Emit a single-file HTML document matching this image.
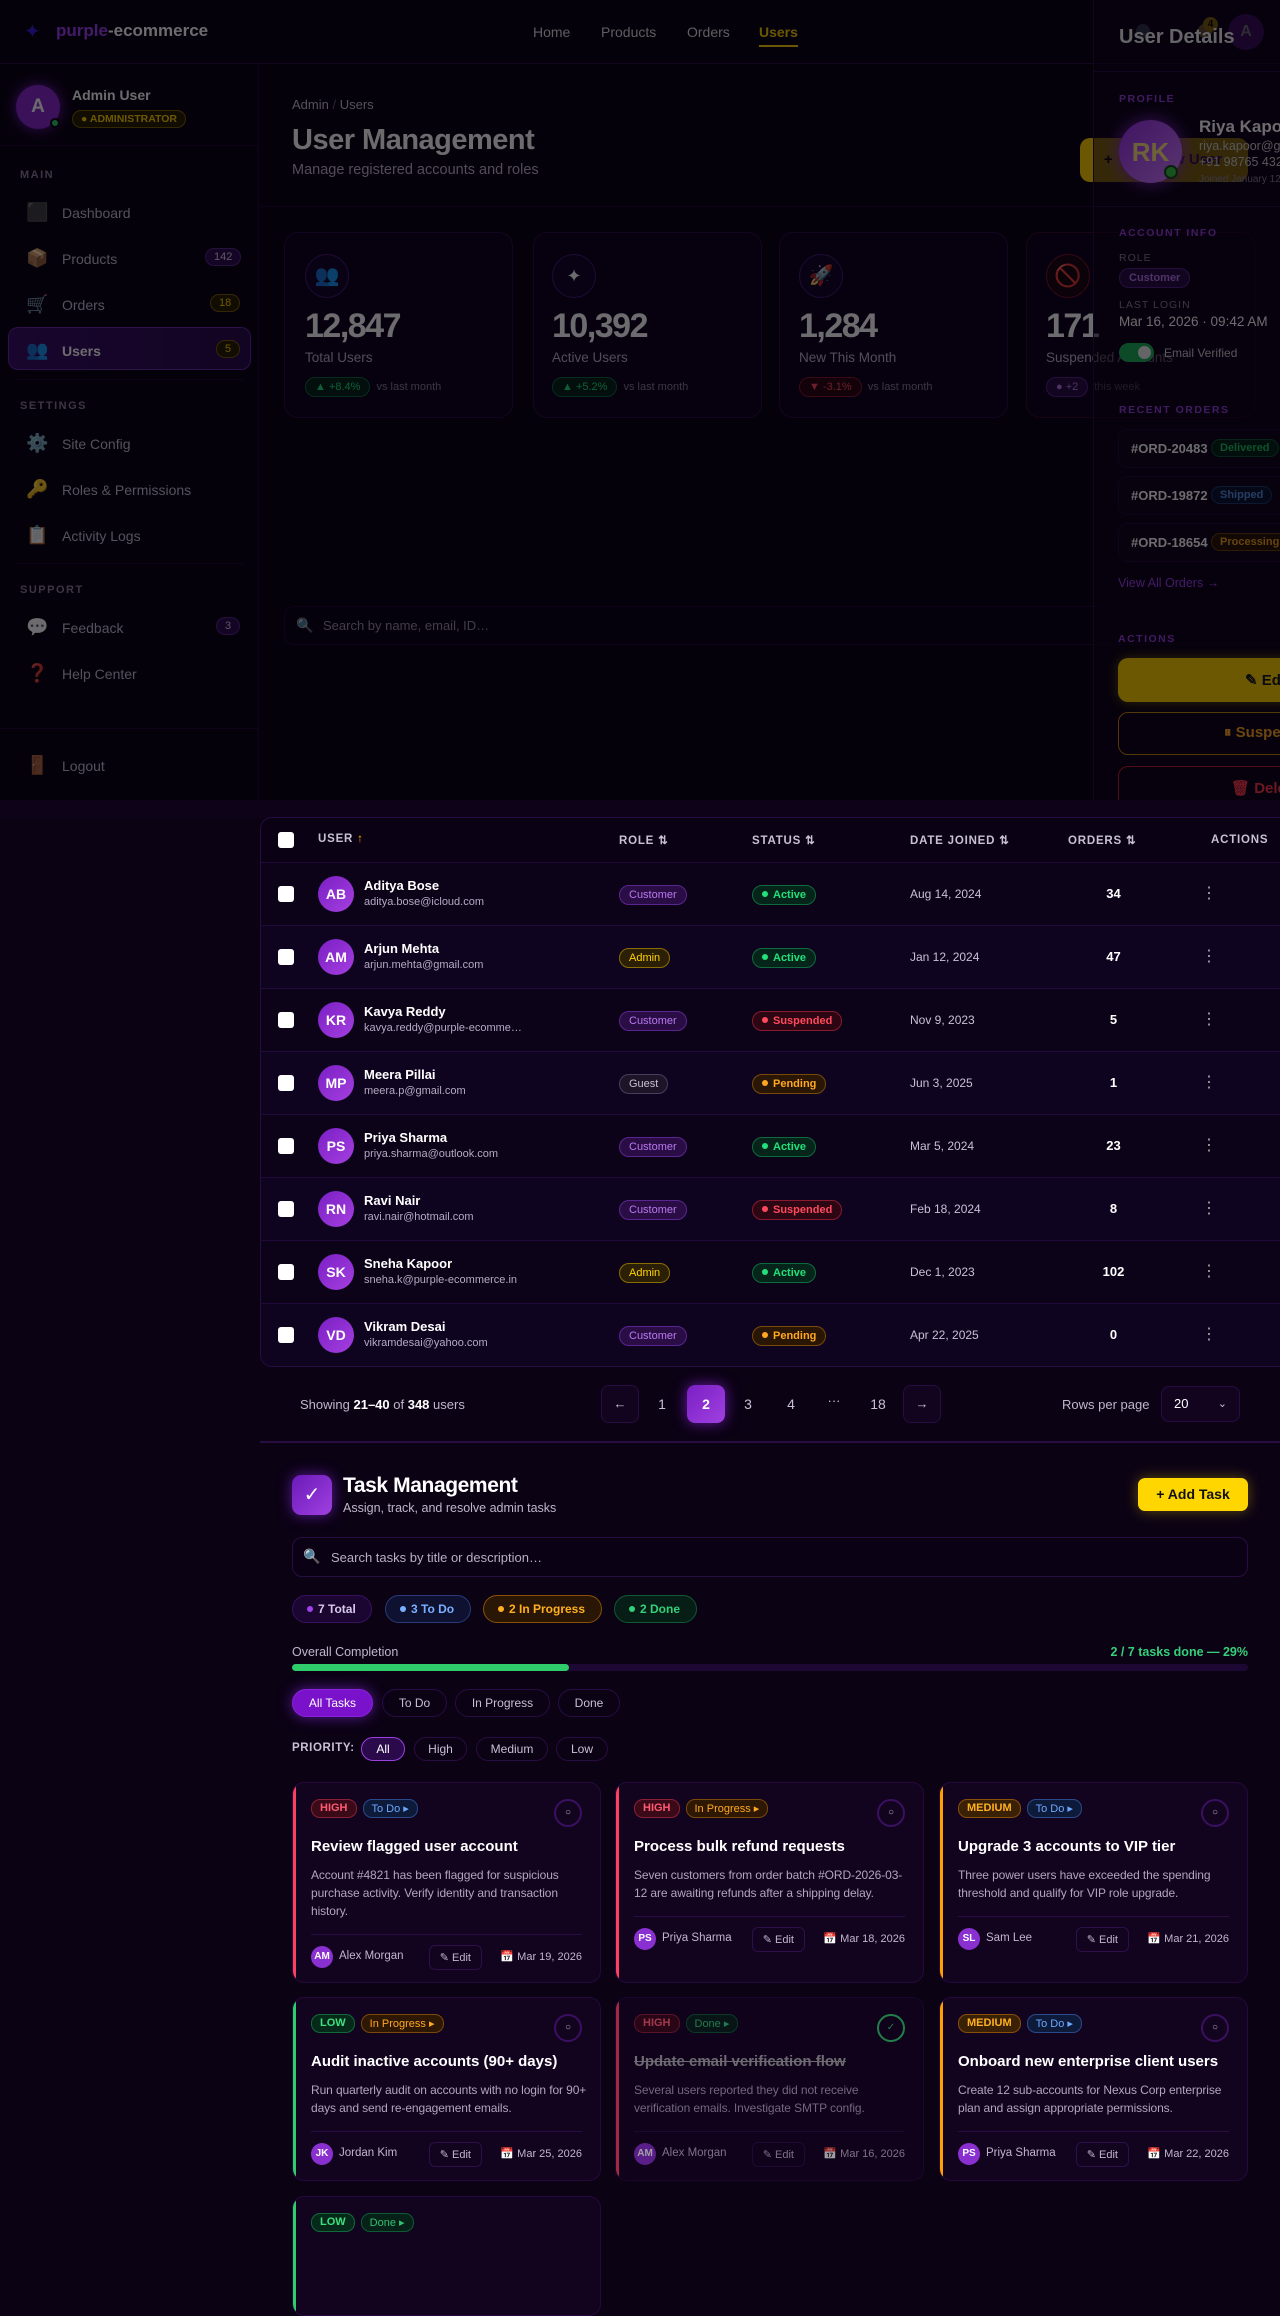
<!DOCTYPE html>
<html><head><meta charset="utf-8">
<style>
*{box-sizing:border-box;margin:0;padding:0}
html,body{width:1280px;height:2215px;overflow:hidden;background:#0b0214;font-family:"Liberation Sans",sans-serif;color:#fff}
.a{position:absolute}
.top{position:absolute;left:0;top:0;width:1280px;height:800px;background:#0a0412;overflow:hidden}
.hdr{left:0;top:0;width:1280px;height:64px;border-bottom:1px solid #2a0c44;background:#0a0412}
.side{left:0;top:64px;width:259px;height:736px;border-right:1px solid #22093a;background:#0a0412}
.nav{left:26px;font-size:14px;color:#c9c2d4;display:flex;align-items:center}
.nav .ic{width:22px;font-size:18px;margin-right:14px;text-align:center}
.sec{left:20px;font-size:11px;letter-spacing:1.5px;color:#8c7fa0;font-weight:bold}
.bdg{position:absolute;font-size:11px;padding:2px 8px;border-radius:10px}
.card{background:#10041e;border:1px solid #2b0e48;border-radius:14px}
.pill{display:inline-block;font-size:11px;font-weight:bold;padding:3px 9px;border-radius:10px}
.row{position:absolute;left:0;width:1040px;height:63px;border-top:1px solid #22093a}
.cb{position:absolute;left:17px;top:23px;width:16px;height:16px;background:#fff;border-radius:3px}
.av{position:absolute;width:36px;height:36px;border-radius:50%;background:linear-gradient(135deg,#7a1fc4,#a53fe0);font-size:14px;font-weight:bold;text-align:center;line-height:36px}
.nm{position:absolute;left:103px;top:15px;font-size:13px;font-weight:bold}
.em{position:absolute;left:103px;top:33px;font-size:11px;color:#b4aac2}
.cust{background:#2a0d45;border:1px solid #5a2590;color:#b978f0}
.adm{background:#2b2006;border:1px solid #8a6d00;color:#ffd200}
.gst{background:#1d1428;border:1px solid #4a3c5a;color:#c8c0d4}
.act{background:#06251a;border:1px solid #0f6a3e;color:#22e07a}
.sus{background:#2c0612;border:1px solid #8a1a2e;color:#ff4a5e}
.pen{background:#2a1604;border:1px solid #7a4a08;color:#ffa820}
.dot{display:inline-block;width:6px;height:6px;border-radius:50%;background:currentColor;margin-right:5px;vertical-align:1px}
.tcard{position:absolute;width:309px;background:#12031f;border:1px solid #26093e;border-radius:12px;overflow:hidden}
.tcard .lb{position:absolute;left:0;top:0;bottom:0;width:3px}
.tb{position:absolute;top:16px;left:18px;display:flex;gap:6px}
.tp{font-size:11px;font-weight:bold;padding:2px 8px;border-radius:9px}
.hi{background:#3a0a18;border:1px solid #8a2036;color:#ff5a72}
.me{background:#3a2004;border:1px solid #8a5008;color:#ffb020}
.lo{background:#062a1a;border:1px solid #116a3c;color:#3ee07e}
.td{background:#0e1a3a;border:1px solid #2a4a8a;color:#6aa8ff;font-weight:normal}
.ip{background:#2e1804;border:1px solid #7a4a08;color:#ffa820;font-weight:normal}
.dn{background:#062218;border:1px solid #0e5a34;color:#34c070;font-weight:normal}
.circ{position:absolute;right:18px;top:16px;width:28px;height:28px;border-radius:50%;border:2px solid #3a1060;font-size:10px;color:#b8a8c8;text-align:center;line-height:24px}
.tt{position:absolute;left:18px;top:55px;font-size:15px;font-weight:bold;white-space:nowrap}
.ds{position:absolute;left:18px;top:83px;width:280px;font-size:12px;line-height:18px;color:#b0a6bd;letter-spacing:-0.1px}
.ft{position:absolute;left:18px;right:18px;border-top:1px solid #2a0c44;height:44px}
.ft .fa{position:absolute;left:0;top:11px;width:22px;height:22px;border-radius:50%;background:#8a30d0;font-size:10px;font-weight:bold;line-height:22px;text-align:center}
.ft .fn{position:absolute;left:28px;top:15px;font-size:11.5px;color:#c0b6cc}
.ft .fe{position:absolute;right:100px;top:10px;font-size:11px;color:#c0b6cc;border:1px solid #2e0f4a;border-radius:6px;padding:5px 10px}
.ft .fd{position:absolute;right:0;top:15px;font-size:11px;color:#c0b6cc}
.chip{position:absolute;top:1595px;height:28px;border-radius:14px;font-size:12px;font-weight:bold;line-height:26px;padding:0 14px}
.tab{position:absolute;top:1689px;height:28px;border-radius:14px;border:1px solid #2a0c44;font-size:12px;color:#c8bfd4;line-height:26px;text-align:center}
.pr{position:absolute;top:1737px;height:24px;border-radius:12px;border:1px solid #2a0c44;font-size:12px;color:#c8bfd4;line-height:22px;text-align:center}
.dl{font-size:10.5px;letter-spacing:1.5px;font-weight:bold;color:#9a40e0}
.oc{position:absolute;left:1118px;width:200px;height:39px;border:1px solid #24083a;border-radius:9px;background:#0f0519}
.oc b{position:absolute;left:12px;top:11px;font-size:13px}
.oc span{position:absolute;left:92px;top:9px;font-size:11px;font-weight:bold;padding:2px 8px;border-radius:9px}
</style></head><body>

<div class="top">
 <div class="a hdr">
  <div class="a" style="left:24px;top:19px;font-size:20px;color:#3420e0">✦</div>
  <div class="a" style="left:56px;top:21px;font-size:17px;font-weight:bold"><span style="color:#a040f0">purple</span>-ecommerce</div>
  <div class="a" style="left:533px;top:24px;font-size:14px;color:#ddd">Home</div>
  <div class="a" style="left:601px;top:24px;font-size:14px;color:#ddd">Products</div>
  <div class="a" style="left:687px;top:24px;font-size:14px;color:#ddd">Orders</div>
  <div class="a" style="left:759px;top:24px;font-size:14px;color:#ffd000;font-weight:bold">Users</div>
  <div class="a" style="left:759px;top:45px;width:39px;height:2px;background:#ffd000"></div>
  <div class="a" style="left:1136px;top:24px;width:14px;height:14px;border-radius:50%;background:#5a6a88"></div>
  <div class="a" style="left:1198px;top:24px;width:14px;height:14px;border-radius:50%;background:#c8a050"></div>
  <div class="a" style="left:1203px;top:17px;width:15px;height:15px;border-radius:50%;background:#ffd000;color:#000;font-size:10px;font-weight:bold;text-align:center;line-height:15px">4</div>
  <div class="a" style="left:1228px;top:14px;width:36px;height:36px;border-radius:50%;background:#6a1aa8;text-align:center;line-height:36px;font-weight:bold;color:#ddd">A</div>
 </div>
 <div class="a side">
  <div class="a" style="left:16px;top:21px;width:44px;height:44px;border-radius:50%;background:#8a2ad0;text-align:center;line-height:44px;font-size:19px;font-weight:bold;box-shadow:0 0 14px #7a20c0">A</div>
  <div class="a" style="left:50px;top:54px;width:10px;height:10px;border-radius:50%;background:#2ed06a;border:2px solid #0a0412"></div>
  <div class="a" style="left:72px;top:23px;font-size:14px;font-weight:bold">Admin User</div>
  <div class="a" style="left:72px;top:46px;font-size:10.5px;font-weight:bold;color:#ffd000;border:1px solid #7a6000;background:#2a2000;border-radius:9px;padding:2px 8px">● ADMINISTRATOR</div>
  <div class="a" style="left:0;top:81px;width:259px;height:1px;background:#22093a"></div>
  <div class="a sec" style="top:105px">MAIN</div>
  <div class="a nav" style="top:138px"><span class="ic">⬛</span>Dashboard</div>
  <div class="a nav" style="top:184px"><span class="ic">📦</span>Products</div>
  <div class="bdg" style="left:205px;top:184px;background:#2c0c4e;border:1px solid #5a2a90;color:#e0d0f0">142</div>
  <div class="a nav" style="top:230px"><span class="ic">🛒</span>Orders</div>
  <div class="bdg" style="left:210px;top:230px;background:#2a2000;border:1px solid #7a6000;color:#ffd000">18</div>
  <div class="a" style="left:8px;top:263px;width:243px;height:43px;border-radius:10px;background:linear-gradient(90deg,#3a0f66,#2a0a4c);border:1px solid #6a2aa8"></div>
  <div class="a nav" style="top:276px;color:#fff;font-weight:bold"><span class="ic">👥</span>Users</div>
  <div class="bdg" style="left:216px;top:276px;background:#2a2000;border:1px solid #7a6000;color:#ffd000">5</div>
  <div class="a" style="left:16px;top:315px;width:228px;height:1px;background:#1c0830"></div>
  <div class="a sec" style="top:336px">SETTINGS</div>
  <div class="a nav" style="top:369px"><span class="ic">⚙️</span>Site Config</div>
  <div class="a nav" style="top:415px"><span class="ic">🔑</span>Roles &amp; Permissions</div>
  <div class="a nav" style="top:461px"><span class="ic">📋</span>Activity Logs</div>
  <div class="a" style="left:16px;top:499px;width:228px;height:1px;background:#1c0830"></div>
  <div class="a sec" style="top:520px">SUPPORT</div>
  <div class="a nav" style="top:553px"><span class="ic">💬</span>Feedback</div>
  <div class="bdg" style="left:216px;top:553px;background:#2c0c4e;border:1px solid #5a2a90;color:#e0d0f0">3</div>
  <div class="a nav" style="top:599px"><span class="ic">❓</span>Help Center</div>
  <div class="a" style="left:0;top:664px;width:259px;height:1px;background:#22093a"></div>
  <div class="a nav" style="top:691px"><span class="ic">🚪</span>Logout</div>
 </div>
 <div class="a" style="left:292px;top:97px;font-size:13px;color:#c8c0d4">Admin <span style="color:#6a5a80">/</span> Users</div>
 <div class="a" style="left:292px;top:124px;font-size:29px;font-weight:bold;letter-spacing:-0.5px">User Management</div>
 <div class="a" style="left:292px;top:162px;font-size:14.5px;color:#c0b6cc">Manage registered accounts and roles</div>
 <div class="a" style="left:1080px;top:138px;width:168px;height:44px;border-radius:10px;background:#ffd000;color:#5a10a0;font-size:15px;font-weight:bold;line-height:44px;padding-left:24px"><span style="color:#000">+</span>&nbsp; Add New User</div>
 <div class="a" style="left:260px;top:206px;width:1020px;height:1px;background:#22093a"></div>
 <div class="a card" style="left:284px;top:232px;width:229px;height:186px"></div>
 <div class="a card" style="left:533px;top:232px;width:229px;height:186px"></div>
 <div class="a card" style="left:779px;top:232px;width:229px;height:186px"></div>
 <div class="a card" style="left:1026px;top:232px;width:229px;height:186px;border-color:#3a0c22"></div>
 <div class="a" style="left:305px;top:254px;width:44px;height:44px;border-radius:50%;border:1px solid #4a1a78;background:#14052a;text-align:center;line-height:42px;font-size:20px">👥</div>
 <div class="a" style="left:552px;top:254px;width:44px;height:44px;border-radius:50%;border:1px solid #4a1a78;background:#14052a;text-align:center;line-height:42px;font-size:18px;color:#fff">✦</div>
 <div class="a" style="left:799px;top:254px;width:44px;height:44px;border-radius:50%;border:1px solid #4a1a78;background:#14052a;text-align:center;line-height:42px;font-size:20px">🚀</div>
 <div class="a" style="left:1046px;top:254px;width:44px;height:44px;border-radius:50%;border:1px solid #7a1a2a;background:#1a0512;text-align:center;line-height:42px;font-size:22px;color:#ff3040">🚫</div>
 <div class="a" style="left:305px;top:307px;font-size:34px;font-weight:bold;letter-spacing:-1.5px">12,847</div>
 <div class="a" style="left:552px;top:307px;font-size:34px;font-weight:bold;letter-spacing:-1.5px">10,392</div>
 <div class="a" style="left:799px;top:307px;font-size:34px;font-weight:bold;letter-spacing:-1.5px">1,284</div>
 <div class="a" style="left:1046px;top:307px;font-size:34px;font-weight:bold;letter-spacing:-1.5px">171</div>
 <div class="a" style="left:305px;top:350px;font-size:13.5px;color:#c0b6cc">Total Users</div>
 <div class="a" style="left:552px;top:350px;font-size:13.5px;color:#c0b6cc">Active Users</div>
 <div class="a" style="left:799px;top:350px;font-size:13.5px;color:#c0b6cc">New This Month</div>
 <div class="a" style="left:1046px;top:350px;font-size:13.5px;color:#c0b6cc">Suspended Accounts</div>
 <div class="a" style="left:305px;top:377px;font-size:11px;color:#8a8098"><span class="pill act" style="font-weight:normal;margin-right:6px">▲ +8.4%</span>vs last month</div>
 <div class="a" style="left:552px;top:377px;font-size:11px;color:#8a8098"><span class="pill act" style="font-weight:normal;margin-right:6px">▲ +5.2%</span>vs last month</div>
 <div class="a" style="left:799px;top:377px;font-size:11px;color:#8a8098"><span class="pill sus" style="font-weight:normal;margin-right:6px">▼ -3.1%</span>vs last month</div>
 <div class="a" style="left:1046px;top:377px;font-size:11px;color:#8a8098"><span class="pill cust" style="font-weight:normal;margin-right:6px">● +2</span>this week</div>
 <div class="a" style="left:284px;top:606px;width:1000px;height:39px;border:1px solid #22093a;border-radius:10px;background:#0b0316"></div>
 <div class="a" style="left:296px;top:617px;font-size:14px">🔍</div>
 <div class="a" style="left:323px;top:618px;font-size:13px;color:#9a90a8">Search by name, email, ID…</div>

 <div class="a" style="left:1093px;top:0;width:200px;height:800px;background:rgba(14,5,26,0.55);border-left:1px solid #2a0c44">
  <div class="a" style="left:25px;top:26px;font-size:20px;font-weight:bold;color:#eee">User Details</div>
  <div class="a" style="left:0;top:71px;width:200px;height:1px;background:#2a0c44"></div>
  <div class="a dl" style="left:25px;top:93px">PROFILE</div>
  <div class="a" style="left:25px;top:120px;width:63px;height:63px;border-radius:50%;background:linear-gradient(135deg,#9a30e8,#d080ff);box-shadow:0 0 18px #8a2ad0"></div>
  <div class="a" style="left:25px;top:137px;width:63px;text-align:center;font-size:26px;font-weight:bold;color:#ffe880">RK</div>
  <div class="a" style="left:70px;top:165px;width:14px;height:14px;border-radius:50%;background:#3ac040;border:2px solid #1a4a1a"></div>
  <div class="a" style="left:105px;top:117px;font-size:17px;font-weight:bold;white-space:nowrap">Riya Kapoor</div>
  <div class="a" style="left:105px;top:139px;font-size:12.5px;color:#ccc;white-space:nowrap">riya.kapoor@gmail.com</div>
  <div class="a" style="left:105px;top:155px;font-size:12.5px;color:#ccc;white-space:nowrap">+91 98765 43210</div>
  <div class="a" style="left:105px;top:174px;font-size:10px;color:#8a8098;white-space:nowrap">Joined January 12, 2024</div>
  <div class="a" style="left:0;top:206px;width:200px;height:1px;background:#2a0c44"></div>
  <div class="a dl" style="left:25px;top:227px">ACCOUNT INFO</div>
  <div class="a" style="left:25px;top:252px;font-size:10.5px;letter-spacing:1px;color:#8a8098">ROLE</div>
  <div class="a pill cust" style="left:25px;top:268px">Customer</div>
  <div class="a" style="left:25px;top:299px;font-size:10.5px;letter-spacing:1px;color:#8a8098">LAST LOGIN</div>
  <div class="a" style="left:25px;top:314px;font-size:13.5px;white-space:nowrap">Mar 16, 2026 · 09:42 AM</div>
  <div class="a" style="left:25px;top:343px;width:35px;height:19px;border-radius:10px;background:#1eb05a"></div>
  <div class="a" style="left:44px;top:346px;width:13px;height:13px;border-radius:50%;background:#eee"></div>
  <div class="a" style="left:70px;top:346px;font-size:12px;color:#ccc;white-space:nowrap">Email Verified</div>
  <div class="a dl" style="left:25px;top:404px">RECENT ORDERS</div>
 </div>
 <div class="oc" style="top:429px"><b>#ORD-20483</b><span style="color:#20c060;border:1px solid #0e5a32;background:#05251a">Delivered</span></div>
 <div class="oc" style="top:476px"><b>#ORD-19872</b><span style="color:#5a90e0;border:1px solid #1e3a70;background:#0a1630">Shipped</span></div>
 <div class="oc" style="top:523px"><b>#ORD-18654</b><span style="color:#f0a020;border:1px solid #6a4008;background:#2a1604">Processing</span></div>
 <div class="a" style="left:1118px;top:576px;font-size:12.5px;color:#a040f0">View All Orders →</div>
 <div class="a dl" style="left:1118px;top:633px">ACTIONS</div>
 <div class="a" style="left:1118px;top:658px;width:200px;height:44px;border-radius:10px;background:#ffd000;box-shadow:0 0 12px rgba(255,208,0,.4)"></div>
 <div class="a" style="left:1245px;top:671px;font-size:15px;font-weight:bold;color:#1a1a1a;white-space:nowrap">✎ Edit</div>
 <div class="a" style="left:1118px;top:712px;width:200px;height:43px;border-radius:10px;border:1px solid #c88010"></div>
 <div class="a" style="left:1224px;top:724px;font-size:15px;font-weight:bold;color:#ffa820;white-space:nowrap">⏸ Suspend</div>
 <div class="a" style="left:1118px;top:766px;width:200px;height:43px;border-radius:10px;border:1px solid #c02030"></div>
 <div class="a" style="left:1231px;top:779px;font-size:15px;font-weight:bold;color:#ff3a4a;white-space:nowrap">🗑 Delete</div>
 <div class="a" style="left:0;top:0;width:1280px;height:800px;background:rgba(2,0,6,0.58)"></div>
</div>

<div class="a" style="left:0;top:800px;width:1280px;height:18px;background:#0e0219"></div>
<div class="a" style="left:260px;top:817px;width:1040px;height:550px;border:1px solid #2a0c44;border-radius:12px;background:#0d0319;overflow:hidden">
 <div class="a" style="left:0;top:0;width:1040px;height:44px;background:#0a0214"></div>
 <div class="cb" style="top:14px"></div>
 <div class="a" style="left:57px;top:15px;font-size:11.5px;font-weight:bold;letter-spacing:.8px;color:#c8c0d4">USER <span style="color:#ffa000">↑</span></div>
 <div class="a" style="left:358px;top:15px;font-size:11.5px;font-weight:bold;letter-spacing:.8px;color:#c8c0d4">ROLE ⇅</div>
 <div class="a" style="left:491px;top:15px;font-size:11.5px;font-weight:bold;letter-spacing:.8px;color:#c8c0d4">STATUS ⇅</div>
 <div class="a" style="left:649px;top:15px;font-size:11.5px;font-weight:bold;letter-spacing:.8px;color:#c8c0d4">DATE JOINED ⇅</div>
 <div class="a" style="left:807px;top:15px;font-size:11.5px;font-weight:bold;letter-spacing:.8px;color:#c8c0d4">ORDERS ⇅</div>
 <div class="a" style="left:950px;top:16px;font-size:11.5px;font-weight:bold;letter-spacing:.8px;color:#c8c0d4">ACTIONS</div>

 <div class="row" style="top:44px;background:#0d0319"><div class="cb"></div><div class="av" style="left:57px;top:13px">AB</div><div class="nm">Aditya Bose</div><div class="em">aditya.bose@icloud.com</div><span class="a pill cust" style="left:358px;top:22px;font-weight:normal">Customer</span><span class="a pill act" style="left:491px;top:22px"><i class="dot"></i>Active</span><div class="a" style="left:649px;top:24px;font-size:12px;color:#c8c0d4">Aug 14, 2024</div><div class="a" style="left:800px;width:105px;text-align:center;top:23px;font-size:13px;font-weight:bold">34</div><div class="a" style="left:940px;top:20px;font-size:16px;color:#aaa">⋮</div></div>
 <div class="row" style="top:107px;background:#0f0420"><div class="cb"></div><div class="av" style="left:57px;top:13px">AM</div><div class="nm">Arjun Mehta</div><div class="em">arjun.mehta@gmail.com</div><span class="a pill adm" style="left:358px;top:22px;font-weight:normal">Admin</span><span class="a pill act" style="left:491px;top:22px"><i class="dot"></i>Active</span><div class="a" style="left:649px;top:24px;font-size:12px;color:#c8c0d4">Jan 12, 2024</div><div class="a" style="left:800px;width:105px;text-align:center;top:23px;font-size:13px;font-weight:bold">47</div><div class="a" style="left:940px;top:20px;font-size:16px;color:#aaa">⋮</div></div>
 <div class="row" style="top:170px;background:#0d0319"><div class="cb"></div><div class="av" style="left:57px;top:13px">KR</div><div class="nm">Kavya Reddy</div><div class="em">kavya.reddy@purple-ecomme…</div><span class="a pill cust" style="left:358px;top:22px;font-weight:normal">Customer</span><span class="a pill sus" style="left:491px;top:22px"><i class="dot"></i>Suspended</span><div class="a" style="left:649px;top:24px;font-size:12px;color:#c8c0d4">Nov 9, 2023</div><div class="a" style="left:800px;width:105px;text-align:center;top:23px;font-size:13px;font-weight:bold">5</div><div class="a" style="left:940px;top:20px;font-size:16px;color:#aaa">⋮</div></div>
 <div class="row" style="top:233px;background:#0f0420"><div class="cb"></div><div class="av" style="left:57px;top:13px">MP</div><div class="nm">Meera Pillai</div><div class="em">meera.p@gmail.com</div><span class="a pill gst" style="left:358px;top:22px;font-weight:normal">Guest</span><span class="a pill pen" style="left:491px;top:22px"><i class="dot"></i>Pending</span><div class="a" style="left:649px;top:24px;font-size:12px;color:#c8c0d4">Jun 3, 2025</div><div class="a" style="left:800px;width:105px;text-align:center;top:23px;font-size:13px;font-weight:bold">1</div><div class="a" style="left:940px;top:20px;font-size:16px;color:#aaa">⋮</div></div>
 <div class="row" style="top:296px;background:#0d0319"><div class="cb"></div><div class="av" style="left:57px;top:13px">PS</div><div class="nm">Priya Sharma</div><div class="em">priya.sharma@outlook.com</div><span class="a pill cust" style="left:358px;top:22px;font-weight:normal">Customer</span><span class="a pill act" style="left:491px;top:22px"><i class="dot"></i>Active</span><div class="a" style="left:649px;top:24px;font-size:12px;color:#c8c0d4">Mar 5, 2024</div><div class="a" style="left:800px;width:105px;text-align:center;top:23px;font-size:13px;font-weight:bold">23</div><div class="a" style="left:940px;top:20px;font-size:16px;color:#aaa">⋮</div></div>
 <div class="row" style="top:359px;background:#0f0420"><div class="cb"></div><div class="av" style="left:57px;top:13px">RN</div><div class="nm">Ravi Nair</div><div class="em">ravi.nair@hotmail.com</div><span class="a pill cust" style="left:358px;top:22px;font-weight:normal">Customer</span><span class="a pill sus" style="left:491px;top:22px"><i class="dot"></i>Suspended</span><div class="a" style="left:649px;top:24px;font-size:12px;color:#c8c0d4">Feb 18, 2024</div><div class="a" style="left:800px;width:105px;text-align:center;top:23px;font-size:13px;font-weight:bold">8</div><div class="a" style="left:940px;top:20px;font-size:16px;color:#aaa">⋮</div></div>
 <div class="row" style="top:422px;background:#0d0319"><div class="cb"></div><div class="av" style="left:57px;top:13px">SK</div><div class="nm">Sneha Kapoor</div><div class="em">sneha.k@purple-ecommerce.in</div><span class="a pill adm" style="left:358px;top:22px;font-weight:normal">Admin</span><span class="a pill act" style="left:491px;top:22px"><i class="dot"></i>Active</span><div class="a" style="left:649px;top:24px;font-size:12px;color:#c8c0d4">Dec 1, 2023</div><div class="a" style="left:800px;width:105px;text-align:center;top:23px;font-size:13px;font-weight:bold">102</div><div class="a" style="left:940px;top:20px;font-size:16px;color:#aaa">⋮</div></div>
 <div class="row" style="top:485px;background:#0f0420"><div class="cb"></div><div class="av" style="left:57px;top:13px">VD</div><div class="nm">Vikram Desai</div><div class="em">vikramdesai@yahoo.com</div><span class="a pill cust" style="left:358px;top:22px;font-weight:normal">Customer</span><span class="a pill pen" style="left:491px;top:22px"><i class="dot"></i>Pending</span><div class="a" style="left:649px;top:24px;font-size:12px;color:#c8c0d4">Apr 22, 2025</div><div class="a" style="left:800px;width:105px;text-align:center;top:23px;font-size:13px;font-weight:bold">0</div><div class="a" style="left:940px;top:20px;font-size:16px;color:#aaa">⋮</div></div>
</div>

<div class="a" style="left:260px;top:1367px;width:1020px;height:76px;background:#0b0214;border-bottom:2px solid #2a0c44"></div>
<div class="a" style="left:300px;top:1397px;font-size:13px;color:#c0b6cc">Showing <b style="color:#fff">21–40</b> of <b style="color:#fff">348</b> users</div>
<div class="a" style="left:601px;top:1385px;width:38px;height:38px;border:1px solid #2a0c44;border-radius:8px;background:#12041f;text-align:center;line-height:36px;font-size:13px;color:#c8c0d4">←</div>
<div class="a" style="left:652px;top:1396px;width:20px;text-align:center;font-size:14px;color:#c8c0d4">1</div>
<div class="a" style="left:687px;top:1385px;width:38px;height:38px;border-radius:8px;background:linear-gradient(135deg,#7a1fc4,#a040e0);text-align:center;line-height:38px;font-size:14px;font-weight:bold;box-shadow:0 0 14px #6a1aa8">2</div>
<div class="a" style="left:738px;top:1396px;width:20px;text-align:center;font-size:14px;color:#c8c0d4">3</div>
<div class="a" style="left:781px;top:1396px;width:20px;text-align:center;font-size:14px;color:#c8c0d4">4</div>
<div class="a" style="left:823px;top:1393px;width:22px;text-align:center;font-size:13px;color:#c8c0d4">···</div>
<div class="a" style="left:867px;top:1396px;width:22px;text-align:center;font-size:14px;color:#c8c0d4">18</div>
<div class="a" style="left:903px;top:1385px;width:38px;height:38px;border:1px solid #2a0c44;border-radius:8px;background:#12041f;text-align:center;line-height:36px;font-size:13px;color:#c8c0d4">→</div>
<div class="a" style="left:1062px;top:1397px;font-size:13px;color:#c0b6cc">Rows per page</div>
<div class="a" style="left:1161px;top:1386px;width:79px;height:36px;border:1px solid #2a0c44;border-radius:8px;background:#12041f;font-size:13px;line-height:34px;padding-left:12px">20<span style="position:absolute;right:12px;color:#c8c0d4;font-size:11px">⌄</span></div>

<div class="a" style="left:292px;top:1475px;width:40px;height:40px;border-radius:9px;background:linear-gradient(135deg,#6a1ab8,#a040e0);text-align:center;line-height:40px;font-size:20px;box-shadow:0 0 14px #5a1a98">✓</div>
<div class="a" style="left:343px;top:1474px;font-size:21px;font-weight:bold;letter-spacing:-0.4px">Task Management</div>
<div class="a" style="left:343px;top:1501px;font-size:12.5px;color:#c0b6cc">Assign, track, and resolve admin tasks</div>
<div class="a" style="left:1138px;top:1478px;width:110px;height:33px;border-radius:7px;background:#ffd600;color:#111;font-size:14px;font-weight:bold;text-align:center;line-height:33px;box-shadow:0 0 14px rgba(255,214,0,.35)">+ Add Task</div>
<div class="a" style="left:292px;top:1537px;width:956px;height:40px;border:1px solid #2a0c44;border-radius:10px;background:#0a0214"></div>
<div class="a" style="left:303px;top:1548px;font-size:14px">🔍</div>
<div class="a" style="left:331px;top:1550px;font-size:13px;color:#b8aec6">Search tasks by title or description…</div>
<div class="chip" style="left:292px;width:80px;background:#1a0630;border:1px solid #3a1060;color:#d8c8ec"><span class="dot" style="color:#a040f0"></span>7 Total</div>
<div class="chip" style="left:385px;width:86px;background:#0e1230;border:1px solid #2a3a7a;color:#7ab0ff"><span class="dot"></span>3 To Do</div>
<div class="chip" style="left:483px;width:119px;background:#2a1604;border:1px solid #8a5008;color:#ffb020"><span class="dot"></span>2 In Progress</div>
<div class="chip" style="left:614px;width:83px;background:#061e16;border:1px solid #0e5a34;color:#34d07a"><span class="dot"></span>2 Done</div>
<div class="a" style="left:292px;top:1645px;font-size:12.5px;color:#c0b6cc">Overall Completion</div>
<div class="a" style="left:1080px;top:1645px;width:168px;text-align:right;font-size:12.5px;font-weight:bold;color:#34d07a">2 / 7 tasks done — 29%</div>
<div class="a" style="left:292px;top:1664px;width:956px;height:7px;border-radius:4px;background:#1c0832"></div>
<div class="a" style="left:292px;top:1664px;width:277px;height:7px;border-radius:4px;background:#2ecc6a"></div>
<div class="tab" style="left:292px;width:81px;background:#7a12cc;border-color:#8a22dc;color:#fff;box-shadow:0 0 14px #5a1a98">All Tasks</div>
<div class="tab" style="left:382px;width:65px">To Do</div>
<div class="tab" style="left:455px;width:95px">In Progress</div>
<div class="tab" style="left:558px;width:62px">Done</div>
<div class="a" style="left:292px;top:1742px;font-size:11.5px;font-weight:bold;letter-spacing:.6px;color:#c8c0d4">PRIORITY:</div>
<div class="pr" style="left:361px;width:44px;background:#2a0a4a;border-color:#9a40e0;color:#fff">All</div>
<div class="pr" style="left:414px;width:53px">High</div>
<div class="pr" style="left:476px;width:72px">Medium</div>
<div class="pr" style="left:556px;width:52px">Low</div>

<div class="tcard" style="left:292px;top:1782px;height:201px"><div class="lb" style="background:#ff4060"></div>
 <div class="tb"><span class="tp hi">HIGH</span><span class="tp td">To Do ▸</span></div><div class="circ">○</div>
 <div class="tt">Review flagged user account</div>
 <div class="ds">Account #4821 has been flagged for suspicious purchase activity. Verify identity and transaction history.</div>
 <div class="ft" style="top:151px"><div class="fa">AM</div><div class="fn">Alex Morgan</div><div class="fe">✎ Edit</div><div class="fd">📅 Mar 19, 2026</div></div></div>
<div class="tcard" style="left:615px;top:1782px;height:201px"><div class="lb" style="background:#ff4060"></div>
 <div class="tb"><span class="tp hi">HIGH</span><span class="tp ip">In Progress ▸</span></div><div class="circ">○</div>
 <div class="tt">Process bulk refund requests</div>
 <div class="ds">Seven customers from order batch #ORD-2026-03-12 are awaiting refunds after a shipping delay.</div>
 <div class="ft" style="top:133px"><div class="fa">PS</div><div class="fn">Priya Sharma</div><div class="fe">✎ Edit</div><div class="fd">📅 Mar 18, 2026</div></div></div>
<div class="tcard" style="left:939px;top:1782px;height:201px"><div class="lb" style="background:#ffa000"></div>
 <div class="tb"><span class="tp me">MEDIUM</span><span class="tp td">To Do ▸</span></div><div class="circ">○</div>
 <div class="tt">Upgrade 3 accounts to VIP tier</div>
 <div class="ds">Three power users have exceeded the spending threshold and qualify for VIP role upgrade.</div>
 <div class="ft" style="top:133px"><div class="fa">SL</div><div class="fn">Sam Lee</div><div class="fe">✎ Edit</div><div class="fd">📅 Mar 21, 2026</div></div></div>

<div class="tcard" style="left:292px;top:1997px;height:184px"><div class="lb" style="background:#2ecc6a"></div>
 <div class="tb"><span class="tp lo">LOW</span><span class="tp ip">In Progress ▸</span></div><div class="circ">○</div>
 <div class="tt">Audit inactive accounts (90+ days)</div>
 <div class="ds">Run quarterly audit on accounts with no login for 90+ days and send re-engagement emails.</div>
 <div class="ft" style="top:133px"><div class="fa">JK</div><div class="fn">Jordan Kim</div><div class="fe">✎ Edit</div><div class="fd">📅 Mar 25, 2026</div></div></div>
<div class="tcard" style="left:615px;top:1997px;height:184px;opacity:.62"><div class="lb" style="background:#ff4060"></div>
 <div class="tb"><span class="tp hi">HIGH</span><span class="tp dn">Done ▸</span></div><div class="circ" style="border-color:#2ecc6a;color:#2ecc6a">✓</div>
 <div class="tt" style="text-decoration:line-through;color:#aaa">Update email verification flow</div>
 <div class="ds">Several users reported they did not receive verification emails. Investigate SMTP config.</div>
 <div class="ft" style="top:133px"><div class="fa">AM</div><div class="fn">Alex Morgan</div><div class="fe">✎ Edit</div><div class="fd">📅 Mar 16, 2026</div></div></div>
<div class="tcard" style="left:939px;top:1997px;height:184px"><div class="lb" style="background:#ffa000"></div>
 <div class="tb"><span class="tp me">MEDIUM</span><span class="tp td">To Do ▸</span></div><div class="circ">○</div>
 <div class="tt">Onboard new enterprise client users</div>
 <div class="ds">Create 12 sub-accounts for Nexus Corp enterprise plan and assign appropriate permissions.</div>
 <div class="ft" style="top:133px"><div class="fa">PS</div><div class="fn">Priya Sharma</div><div class="fe">✎ Edit</div><div class="fd">📅 Mar 22, 2026</div></div></div>

<div class="tcard" style="left:292px;top:2196px;height:120px"><div class="lb" style="background:#2ecc6a"></div>
 <div class="tb"><span class="tp lo">LOW</span><span class="tp dn">Done ▸</span></div></div>
</body></html>
